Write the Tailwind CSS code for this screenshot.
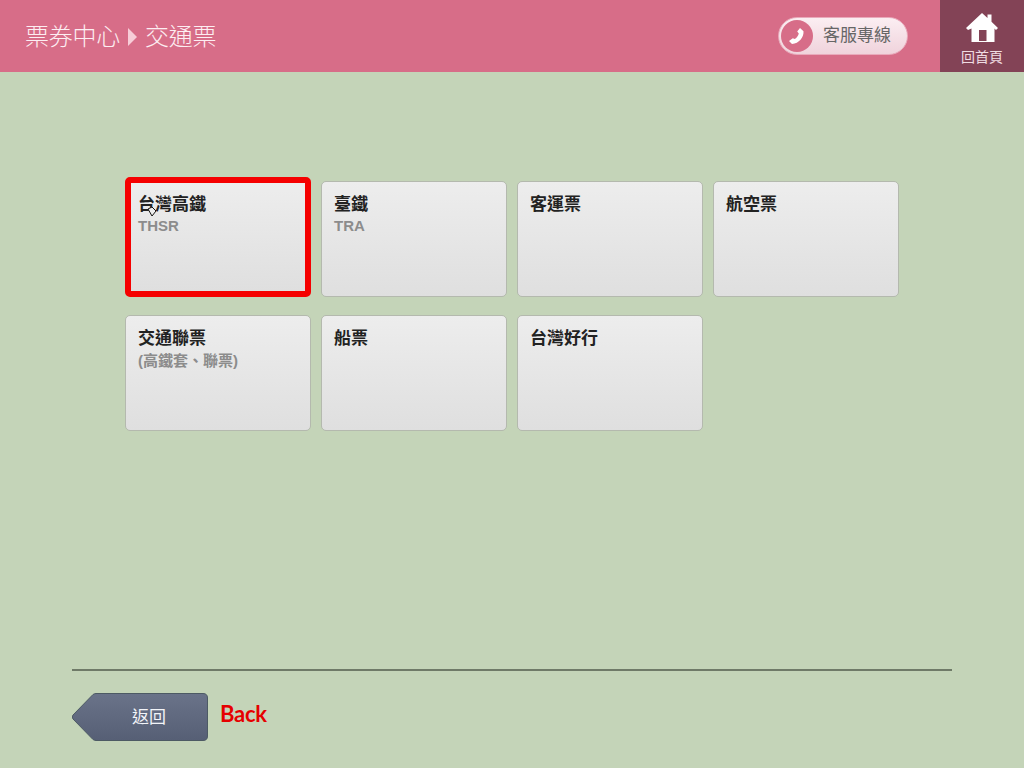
<!DOCTYPE html>
<html lang="zh-Hant">
<head>
  <meta charset="UTF-8">
  <title>票券中心 交通票</title>
  <script src="https://cdn.jsdelivr.net/npm/@tailwindcss/browser@4"></script>
</head>
<body class="w-[1024px] h-[768px] overflow-hidden flex flex-col bg-[#c4d4b8] font-['Liberation_Sans','Noto_Sans_CJK_TC',sans-serif]">

  <!-- Header -->
  <header class="h-[72px] shrink-0 flex items-center bg-[#d76d88]">
    <div class="flex items-center pl-[25px] pt-[2px] text-[#fdeef2] text-[24px] font-light">
      <span class="w-[95px] whitespace-nowrap tracking-[-0.25px]">票券中心</span>
      <svg class="ml-[8px] mr-[8px] w-[9px] h-[18px]" viewBox="0 0 9 18"><path d="M0 0 L9 9 L0 18 Z" fill="#f7cdd8"/></svg>
      <span class="whitespace-nowrap tracking-[-0.25px]">交通票</span>
    </div>
    <div class="ml-auto mr-[32px] w-[130px] h-[38px] flex items-center rounded-full border border-[#e9aabb] bg-gradient-to-b from-[#fbeef2] to-[#f0d3dc] pl-[2px]">
      <span class="w-[32px] h-[32px] rounded-full bg-[#d76d88] flex items-center justify-center">
        <svg class="w-[22px] h-[22px]" viewBox="0 0 22 22"><path d="M14 3 L17.5 6.2 C18 12 13 18.5 6 19 L3 16 L6.8 13.2 L8.8 14 C10.8 12.6 12.4 10.4 12.8 8.4 L11.2 6.6 Z" fill="#fff"/></svg>
      </span>
      <span class="ml-[10px] text-[17px] text-[#666] whitespace-nowrap">客服專線</span>
    </div>
    <a class="w-[84px] h-[72px] flex flex-col items-center bg-[#834356] text-[#f0dce2]">
      <svg class="mt-[13px] w-[32px] h-[29px]" viewBox="0 0 32 29"><path d="M16 0 L21.5 5 V1.5 H25.5 V8.8 L32 15 L30 17 L28.5 15.6 V29 H5.5 V15.6 L2 17 L0 15 Z" fill="#fff"/><rect x="13" y="17" width="7.5" height="11" fill="#834356"/></svg>
      <span class="mt-[7px] text-[14px] leading-[16px] whitespace-nowrap">回首頁</span>
    </a>
  </header>

  <!-- Ticket options -->
  <main class="relative flex-1 pl-[125px] pt-[109px]">
    <div class="grid grid-cols-[repeat(4,186px)] auto-rows-[116px] gap-x-[10px] gap-y-[18px]">
      <div class="relative -mt-[4px] rounded-[5px] border-[6px] border-[#f50000] bg-gradient-to-b from-[#ededed] to-[#dfdfdf] pl-[7px] pt-[11px]">
        <p class="text-[17px] leading-[22px] font-bold text-[#222] whitespace-nowrap">台灣高鐵</p>
        <p class="text-[15px] leading-[20px] font-bold text-[#8c8c8c]">THSR</p>
        <svg class="absolute left-[16px] top-[23px] w-[10px] h-[11px]" viewBox="0 0 10 11"><path d="M1 3 L5 1 L9 5 L5 10 Z" fill="#eee" stroke="#111" stroke-width="1"/></svg>
      </div>
      <div class="rounded-[5px] border border-[#b4b9ae] bg-gradient-to-b from-[#ededed] to-[#dfdfdf] pl-[12px] pt-[12px]">
        <p class="text-[17px] leading-[22px] font-bold text-[#222]">臺鐵</p>
        <p class="text-[15px] leading-[20px] font-bold text-[#8c8c8c]">TRA</p>
      </div>
      <div class="rounded-[5px] border border-[#b4b9ae] bg-gradient-to-b from-[#ededed] to-[#dfdfdf] pl-[12px] pt-[12px]">
        <p class="text-[17px] leading-[22px] font-bold text-[#222]">客運票</p>
      </div>
      <div class="rounded-[5px] border border-[#b4b9ae] bg-gradient-to-b from-[#ededed] to-[#dfdfdf] pl-[12px] pt-[12px]">
        <p class="text-[17px] leading-[22px] font-bold text-[#222]">航空票</p>
      </div>
      <div class="rounded-[5px] border border-[#b4b9ae] bg-gradient-to-b from-[#ededed] to-[#dfdfdf] pl-[12px] pt-[12px]">
        <p class="text-[17px] leading-[22px] font-bold text-[#222]">交通聯票</p>
        <p class="text-[15px] leading-[22px] font-bold text-[#8c8c8c] whitespace-nowrap">(高鐵套、聯票)</p>
      </div>
      <div class="rounded-[5px] border border-[#b4b9ae] bg-gradient-to-b from-[#ededed] to-[#dfdfdf] pl-[12px] pt-[12px]">
        <p class="text-[17px] leading-[22px] font-bold text-[#222]">船票</p>
      </div>
      <div class="rounded-[5px] border border-[#b4b9ae] bg-gradient-to-b from-[#ededed] to-[#dfdfdf] pl-[12px] pt-[12px]">
        <p class="text-[17px] leading-[22px] font-bold text-[#222]">台灣好行</p>
      </div>
    </div>
  </main>

  <!-- Footer -->
  <footer class="shrink-0 h-[99px] mx-[72px] border-t-2 border-[#6f7a68] pt-[22px] flex items-start">
    <div class="relative w-[136px] h-[48px]">
      <svg class="absolute inset-0 w-[136px] h-[48px]" viewBox="0 0 136 48">
        <defs><linearGradient id="backFill" x1="0" y1="0" x2="0" y2="1"><stop offset="0" stop-color="#6a7389"/><stop offset="1" stop-color="#565f75"/></linearGradient></defs>
        <path d="M1 22 L21 1.5 Q22.5 0.5 24 0.5 H131 Q135.5 0.5 135.5 5 V43 Q135.5 47.5 131 47.5 H24 Q22.5 47.5 21 46.5 L1 26 Q-0.5 24 1 22 Z" fill="url(#backFill)" stroke="#4d5a64" stroke-width="1"/>
      </svg>
      <span class="absolute left-[60px] top-[15px] text-[17px] leading-[20px] text-[#f2f4f8] whitespace-nowrap">返回</span>
    </div>
    <span class="ml-[12px] mt-[7px] text-[22px] leading-[28px] font-bold tracking-[-0.3px] text-[#e60000] font-['Lato',sans-serif]">Back</span>
  </footer>
</body>
</html>
